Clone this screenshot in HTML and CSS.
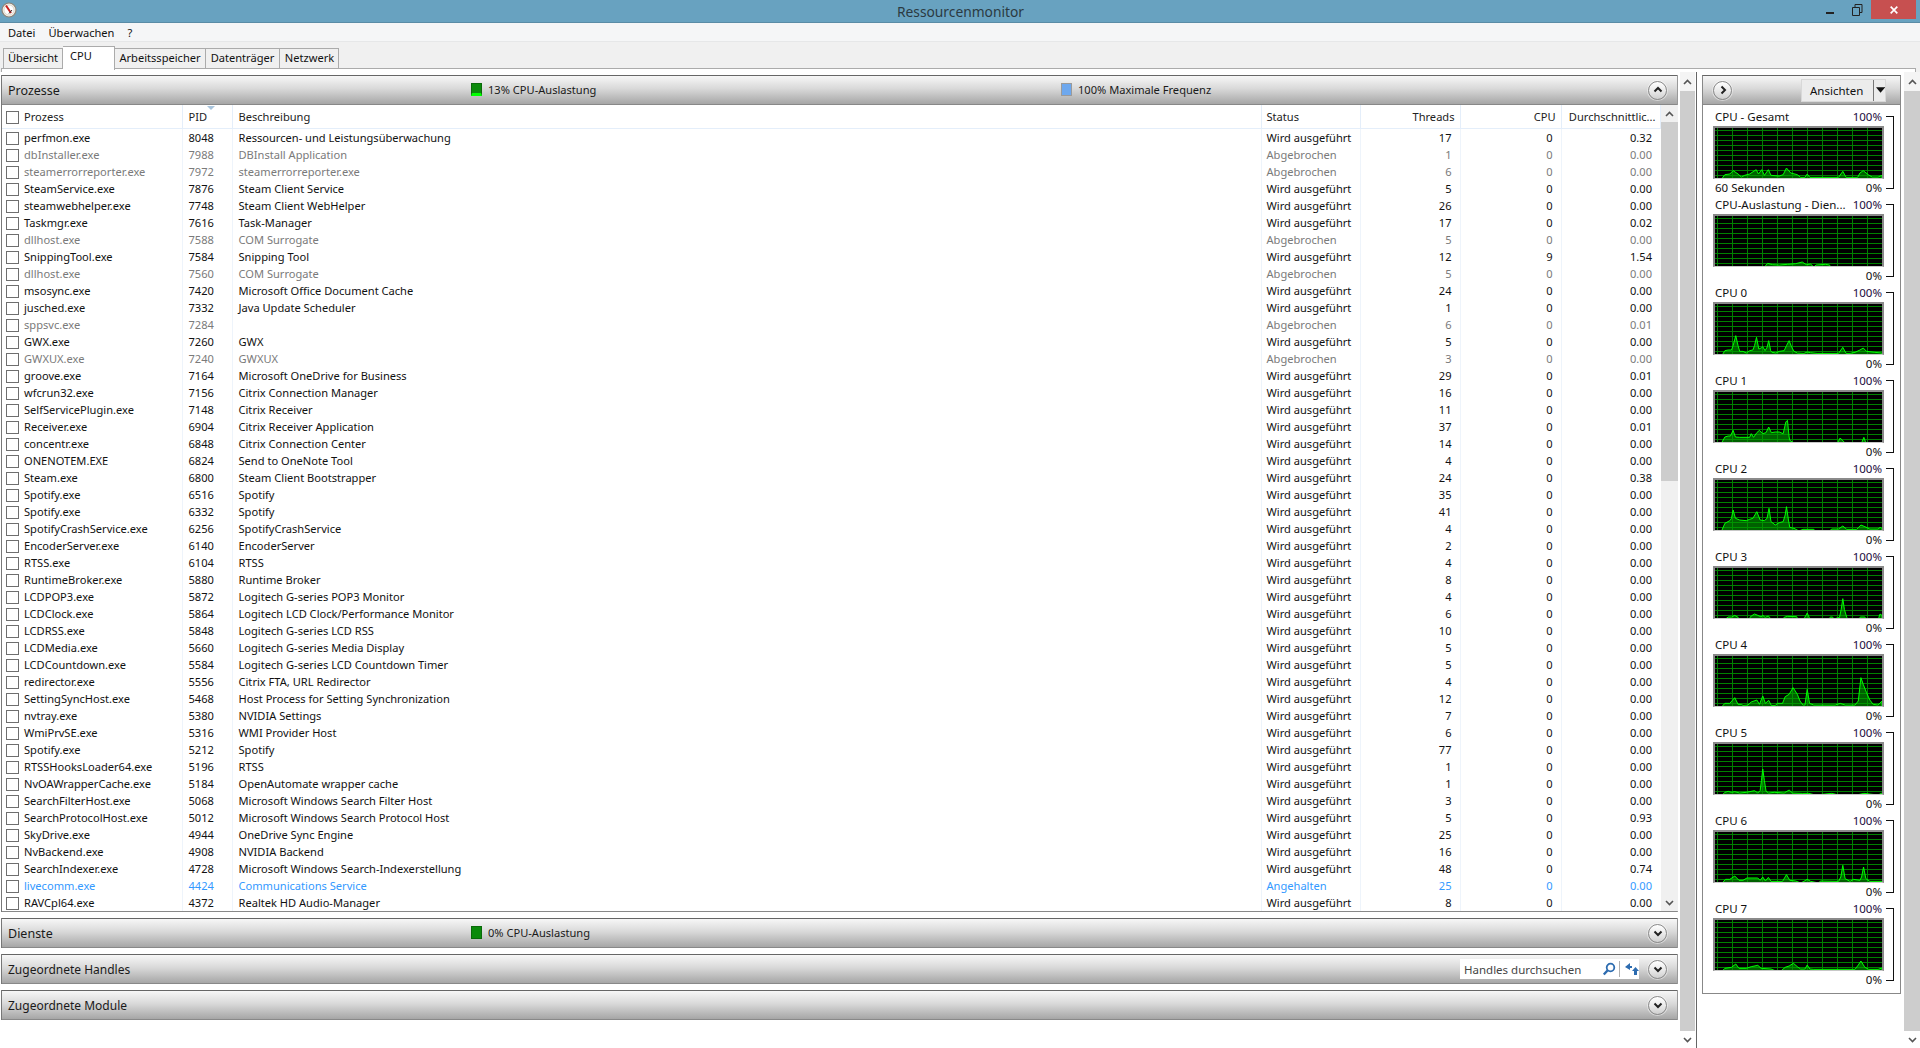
FILE: index.html
```html
<!DOCTYPE html>
<html lang="de">
<head>
<meta charset="utf-8">
<title>Ressourcenmonitor</title>
<link rel="stylesheet" href="styles.css">
</head>
<body>
<div class="app">
  <header class="titlebar">
    <div class="titleleft"><svg class="appicon" viewBox="0 0 16 16" width="16" height="16"><circle cx="8" cy="8" r="7" fill="#f4efe6" stroke="#8a8378" stroke-width="1.2"/><circle cx="8" cy="8" r="5" fill="#fff" stroke="#c9c2b4" stroke-width=".6"/><path d="M5 3.5 L10 11" stroke="#c8201c" stroke-width="2"/><path d="M8 11.5 L11 8" stroke="#333" stroke-width="1"/></svg></div>
    <div class="wintitle">Ressourcenmonitor</div>
    <div class="winbtns">
      <svg class="wb" viewBox="0 0 26 19" width="26" height="19"><rect x="8" y="12" width="8" height="2" fill="#222"/></svg>
      <svg class="wb" viewBox="0 0 26 19" width="26" height="19"><path d="M8.5 7.5h7v8h-7zM11 7V4.5h7v8h-2.5" fill="none" stroke="#222"/></svg>
      <div class="closebtn"><svg viewBox="0 0 12 12" width="10" height="10"><path d="M2 2l8 8M10 2l-8 8" stroke="#fff" stroke-width="2"/></svg></div>
    </div>
  </header>
  <nav class="menubar"><span>Datei</span><span>Überwachen</span><span>?</span></nav>
  <div class="tabstrip">
    <div class="tabs">
      <div class="tab t-uber">Übersicht</div>
      <div class="tab active t-cpu">CPU</div>
      <div class="tab t-mem">Arbeitsspeicher</div>
      <div class="tab t-disk">Datenträger</div>
      <div class="tab t-net">Netzwerk</div>
    </div>
    <div class="tabline"></div>
  </div>
  <main class="main">
    <div class="leftpane">
      <section class="panel">
        <div class="sechead">
          <div class="sectitle">Prozesse</div>
          <div class="ind ind-first"><i class="sq sq-green sq-lit"></i>13% CPU-Auslastung</div>
          <div class="ind"><i class="sq sq-blue"></i>100% Maximale Frequenz</div>
          <span class="circle"><svg viewBox="0 0 12 12" width="12" height="12"><path d="M2.5 7.5L6 4l3.5 3.5" fill="none" stroke="#222" stroke-width="2"/></svg></span>
        </div>
        <div class="listwrap">
          <table class="ptable">
            <colgroup><col class="w-name"><col class="w-pid"><col class="w-desc"><col class="w-stat"><col class="w-thr"><col class="w-cpu"><col class="w-avg"></colgroup>
            <thead>
              <tr><th class="name"><i class="cb"></i>Prozess</th><th class="pidh">PID<i class="sortmark"></i></th><th>Beschreibung</th><th class="stat">Status</th><th class="num">Threads</th><th class="num">CPU</th><th class="num avgh">Durchschnittlic...</th></tr>
            </thead>
            <tbody>
              <tr><td class="name"><i class="cb"></i>perfmon.exe</td><td>8048</td><td>Ressourcen- und Leistungsüberwachung</td><td class="stat">Wird ausgeführt</td><td class="num">17</td><td class="num">0</td><td class="num">0.32</td></tr>
              <tr class="off"><td class="name"><i class="cb"></i>dbInstaller.exe</td><td>7988</td><td>DBInstall Application</td><td class="stat">Abgebrochen</td><td class="num">1</td><td class="num">0</td><td class="num">0.00</td></tr>
              <tr class="off"><td class="name"><i class="cb"></i>steamerrorreporter.exe</td><td>7972</td><td>steamerrorreporter.exe</td><td class="stat">Abgebrochen</td><td class="num">6</td><td class="num">0</td><td class="num">0.00</td></tr>
              <tr><td class="name"><i class="cb"></i>SteamService.exe</td><td>7876</td><td>Steam Client Service</td><td class="stat">Wird ausgeführt</td><td class="num">5</td><td class="num">0</td><td class="num">0.00</td></tr>
              <tr><td class="name"><i class="cb"></i>steamwebhelper.exe</td><td>7748</td><td>Steam Client WebHelper</td><td class="stat">Wird ausgeführt</td><td class="num">26</td><td class="num">0</td><td class="num">0.00</td></tr>
              <tr><td class="name"><i class="cb"></i>Taskmgr.exe</td><td>7616</td><td>Task-Manager</td><td class="stat">Wird ausgeführt</td><td class="num">17</td><td class="num">0</td><td class="num">0.02</td></tr>
              <tr class="off"><td class="name"><i class="cb"></i>dllhost.exe</td><td>7588</td><td>COM Surrogate</td><td class="stat">Abgebrochen</td><td class="num">5</td><td class="num">0</td><td class="num">0.00</td></tr>
              <tr><td class="name"><i class="cb"></i>SnippingTool.exe</td><td>7584</td><td>Snipping Tool</td><td class="stat">Wird ausgeführt</td><td class="num">12</td><td class="num">9</td><td class="num">1.54</td></tr>
              <tr class="off"><td class="name"><i class="cb"></i>dllhost.exe</td><td>7560</td><td>COM Surrogate</td><td class="stat">Abgebrochen</td><td class="num">5</td><td class="num">0</td><td class="num">0.00</td></tr>
              <tr><td class="name"><i class="cb"></i>msosync.exe</td><td>7420</td><td>Microsoft Office Document Cache</td><td class="stat">Wird ausgeführt</td><td class="num">24</td><td class="num">0</td><td class="num">0.00</td></tr>
              <tr><td class="name"><i class="cb"></i>jusched.exe</td><td>7332</td><td>Java Update Scheduler</td><td class="stat">Wird ausgeführt</td><td class="num">1</td><td class="num">0</td><td class="num">0.00</td></tr>
              <tr class="off"><td class="name"><i class="cb"></i>sppsvc.exe</td><td>7284</td><td></td><td class="stat">Abgebrochen</td><td class="num">6</td><td class="num">0</td><td class="num">0.01</td></tr>
              <tr><td class="name"><i class="cb"></i>GWX.exe</td><td>7260</td><td>GWX</td><td class="stat">Wird ausgeführt</td><td class="num">5</td><td class="num">0</td><td class="num">0.00</td></tr>
              <tr class="off"><td class="name"><i class="cb"></i>GWXUX.exe</td><td>7240</td><td>GWXUX</td><td class="stat">Abgebrochen</td><td class="num">3</td><td class="num">0</td><td class="num">0.00</td></tr>
              <tr><td class="name"><i class="cb"></i>groove.exe</td><td>7164</td><td>Microsoft OneDrive for Business</td><td class="stat">Wird ausgeführt</td><td class="num">29</td><td class="num">0</td><td class="num">0.01</td></tr>
              <tr><td class="name"><i class="cb"></i>wfcrun32.exe</td><td>7156</td><td>Citrix Connection Manager</td><td class="stat">Wird ausgeführt</td><td class="num">16</td><td class="num">0</td><td class="num">0.00</td></tr>
              <tr><td class="name"><i class="cb"></i>SelfServicePlugin.exe</td><td>7148</td><td>Citrix Receiver</td><td class="stat">Wird ausgeführt</td><td class="num">11</td><td class="num">0</td><td class="num">0.00</td></tr>
              <tr><td class="name"><i class="cb"></i>Receiver.exe</td><td>6904</td><td>Citrix Receiver Application</td><td class="stat">Wird ausgeführt</td><td class="num">37</td><td class="num">0</td><td class="num">0.01</td></tr>
              <tr><td class="name"><i class="cb"></i>concentr.exe</td><td>6848</td><td>Citrix Connection Center</td><td class="stat">Wird ausgeführt</td><td class="num">14</td><td class="num">0</td><td class="num">0.00</td></tr>
              <tr><td class="name"><i class="cb"></i>ONENOTEM.EXE</td><td>6824</td><td>Send to OneNote Tool</td><td class="stat">Wird ausgeführt</td><td class="num">4</td><td class="num">0</td><td class="num">0.00</td></tr>
              <tr><td class="name"><i class="cb"></i>Steam.exe</td><td>6800</td><td>Steam Client Bootstrapper</td><td class="stat">Wird ausgeführt</td><td class="num">24</td><td class="num">0</td><td class="num">0.38</td></tr>
              <tr><td class="name"><i class="cb"></i>Spotify.exe</td><td>6516</td><td>Spotify</td><td class="stat">Wird ausgeführt</td><td class="num">35</td><td class="num">0</td><td class="num">0.00</td></tr>
              <tr><td class="name"><i class="cb"></i>Spotify.exe</td><td>6332</td><td>Spotify</td><td class="stat">Wird ausgeführt</td><td class="num">41</td><td class="num">0</td><td class="num">0.00</td></tr>
              <tr><td class="name"><i class="cb"></i>SpotifyCrashService.exe</td><td>6256</td><td>SpotifyCrashService</td><td class="stat">Wird ausgeführt</td><td class="num">4</td><td class="num">0</td><td class="num">0.00</td></tr>
              <tr><td class="name"><i class="cb"></i>EncoderServer.exe</td><td>6140</td><td>EncoderServer</td><td class="stat">Wird ausgeführt</td><td class="num">2</td><td class="num">0</td><td class="num">0.00</td></tr>
              <tr><td class="name"><i class="cb"></i>RTSS.exe</td><td>6104</td><td>RTSS</td><td class="stat">Wird ausgeführt</td><td class="num">4</td><td class="num">0</td><td class="num">0.00</td></tr>
              <tr><td class="name"><i class="cb"></i>RuntimeBroker.exe</td><td>5880</td><td>Runtime Broker</td><td class="stat">Wird ausgeführt</td><td class="num">8</td><td class="num">0</td><td class="num">0.00</td></tr>
              <tr><td class="name"><i class="cb"></i>LCDPOP3.exe</td><td>5872</td><td>Logitech G-series POP3 Monitor</td><td class="stat">Wird ausgeführt</td><td class="num">4</td><td class="num">0</td><td class="num">0.00</td></tr>
              <tr><td class="name"><i class="cb"></i>LCDClock.exe</td><td>5864</td><td>Logitech LCD Clock/Performance Monitor</td><td class="stat">Wird ausgeführt</td><td class="num">6</td><td class="num">0</td><td class="num">0.00</td></tr>
              <tr><td class="name"><i class="cb"></i>LCDRSS.exe</td><td>5848</td><td>Logitech G-series LCD RSS</td><td class="stat">Wird ausgeführt</td><td class="num">10</td><td class="num">0</td><td class="num">0.00</td></tr>
              <tr><td class="name"><i class="cb"></i>LCDMedia.exe</td><td>5660</td><td>Logitech G-series Media Display</td><td class="stat">Wird ausgeführt</td><td class="num">5</td><td class="num">0</td><td class="num">0.00</td></tr>
              <tr><td class="name"><i class="cb"></i>LCDCountdown.exe</td><td>5584</td><td>Logitech G-series LCD Countdown Timer</td><td class="stat">Wird ausgeführt</td><td class="num">5</td><td class="num">0</td><td class="num">0.00</td></tr>
              <tr><td class="name"><i class="cb"></i>redirector.exe</td><td>5556</td><td>Citrix FTA, URL Redirector</td><td class="stat">Wird ausgeführt</td><td class="num">4</td><td class="num">0</td><td class="num">0.00</td></tr>
              <tr><td class="name"><i class="cb"></i>SettingSyncHost.exe</td><td>5468</td><td>Host Process for Setting Synchronization</td><td class="stat">Wird ausgeführt</td><td class="num">12</td><td class="num">0</td><td class="num">0.00</td></tr>
              <tr><td class="name"><i class="cb"></i>nvtray.exe</td><td>5380</td><td>NVIDIA Settings</td><td class="stat">Wird ausgeführt</td><td class="num">7</td><td class="num">0</td><td class="num">0.00</td></tr>
              <tr><td class="name"><i class="cb"></i>WmiPrvSE.exe</td><td>5316</td><td>WMI Provider Host</td><td class="stat">Wird ausgeführt</td><td class="num">6</td><td class="num">0</td><td class="num">0.00</td></tr>
              <tr><td class="name"><i class="cb"></i>Spotify.exe</td><td>5212</td><td>Spotify</td><td class="stat">Wird ausgeführt</td><td class="num">77</td><td class="num">0</td><td class="num">0.00</td></tr>
              <tr><td class="name"><i class="cb"></i>RTSSHooksLoader64.exe</td><td>5196</td><td>RTSS</td><td class="stat">Wird ausgeführt</td><td class="num">1</td><td class="num">0</td><td class="num">0.00</td></tr>
              <tr><td class="name"><i class="cb"></i>NvOAWrapperCache.exe</td><td>5184</td><td>OpenAutomate wrapper cache</td><td class="stat">Wird ausgeführt</td><td class="num">1</td><td class="num">0</td><td class="num">0.00</td></tr>
              <tr><td class="name"><i class="cb"></i>SearchFilterHost.exe</td><td>5068</td><td>Microsoft Windows Search Filter Host</td><td class="stat">Wird ausgeführt</td><td class="num">3</td><td class="num">0</td><td class="num">0.00</td></tr>
              <tr><td class="name"><i class="cb"></i>SearchProtocolHost.exe</td><td>5012</td><td>Microsoft Windows Search Protocol Host</td><td class="stat">Wird ausgeführt</td><td class="num">5</td><td class="num">0</td><td class="num">0.93</td></tr>
              <tr><td class="name"><i class="cb"></i>SkyDrive.exe</td><td>4944</td><td>OneDrive Sync Engine</td><td class="stat">Wird ausgeführt</td><td class="num">25</td><td class="num">0</td><td class="num">0.00</td></tr>
              <tr><td class="name"><i class="cb"></i>NvBackend.exe</td><td>4908</td><td>NVIDIA Backend</td><td class="stat">Wird ausgeführt</td><td class="num">16</td><td class="num">0</td><td class="num">0.00</td></tr>
              <tr><td class="name"><i class="cb"></i>SearchIndexer.exe</td><td>4728</td><td>Microsoft Windows Search-Indexerstellung</td><td class="stat">Wird ausgeführt</td><td class="num">48</td><td class="num">0</td><td class="num">0.74</td></tr>
              <tr class="susp"><td class="name"><i class="cb"></i>livecomm.exe</td><td>4424</td><td>Communications Service</td><td class="stat">Angehalten</td><td class="num">25</td><td class="num">0</td><td class="num">0.00</td></tr>
              <tr><td class="name"><i class="cb"></i>RAVCpl64.exe</td><td>4372</td><td>Realtek HD Audio-Manager</td><td class="stat">Wird ausgeführt</td><td class="num">8</td><td class="num">0</td><td class="num">0.00</td></tr>
            </tbody>
          </table>
          <div class="vscroll inner">
            <div class="sbtn"><svg viewBox="0 0 9 6" width="9" height="6"><path d="M1 5l3.5-3.5L8 5" fill="none" stroke="#555" stroke-width="1.6"/></svg></div>
            <div class="thumb thumb-inner"></div>
            <div class="sgap"></div>
            <div class="sbtn"><svg viewBox="0 0 9 6" width="9" height="6"><path d="M1 1l3.5 3.5L8 1" fill="none" stroke="#555" stroke-width="1.6"/></svg></div>
          </div>
        </div>
      </section>
      <section class="panel collapsed">
        <div class="sechead">
          <div class="sectitle">Dienste</div>
          <div class="ind ind-first"><i class="sq sq-green"></i>0% CPU-Auslastung</div>
          <span class="circle"><svg viewBox="0 0 12 12" width="12" height="12"><path d="M2.5 4.5L6 8l3.5-3.5" fill="none" stroke="#222" stroke-width="2"/></svg></span>
        </div>
      </section>
      <section class="panel collapsed">
        <div class="sechead">
          <div class="sectitle long">Zugeordnete Handles</div>
          <div class="search">
            <span class="searchtext">Handles durchsuchen</span>
            <svg class="sicon" viewBox="0 0 14 14" width="14" height="14"><circle cx="8.5" cy="5.5" r="3.8" fill="none" stroke="#2d6cb0" stroke-width="1.8"/><path d="M5.7 8.3L1.8 12.5" stroke="#2d6cb0" stroke-width="2.4"/></svg>
            <i class="sdiv"></i>
            <svg class="sicon" viewBox="0 0 16 14" width="16" height="14"><path d="M7 1L2 5l5 3V6h2V4H7z" fill="#2d6cb0"/><path d="M11 13V9H9l3.5-4L16 9h-2v4z" fill="#2d6cb0"/></svg>
          </div>
          <span class="circle near"><svg viewBox="0 0 12 12" width="12" height="12"><path d="M2.5 4.5L6 8l3.5-3.5" fill="none" stroke="#222" stroke-width="2"/></svg></span>
        </div>
      </section>
      <section class="panel collapsed">
        <div class="sechead">
          <div class="sectitle long">Zugeordnete Module</div>
          <span class="circle"><svg viewBox="0 0 12 12" width="12" height="12"><path d="M2.5 4.5L6 8l3.5-3.5" fill="none" stroke="#222" stroke-width="2"/></svg></span>
        </div>
      </section>
    </div>
    <div class="vscroll outer">
      <div class="sbtn"><svg viewBox="0 0 9 6" width="9" height="6"><path d="M1 5l3.5-3.5L8 5" fill="none" stroke="#555" stroke-width="1.6"/></svg></div>
      <div class="thumb thumb-grow"></div>
      <div class="sbtn"><svg viewBox="0 0 9 6" width="9" height="6"><path d="M1 1l3.5 3.5L8 1" fill="none" stroke="#555" stroke-width="1.6"/></svg></div>
    </div>
    <div class="splitter"></div>
    <aside class="rightpane">
      <div class="rightbox">
        <div class="righthead">
          <span class="circle first"><svg viewBox="0 0 12 12" width="12" height="12"><path d="M4.5 2.5L8 6l-3.5 3.5" fill="none" stroke="#222" stroke-width="2"/></svg></span>
          <div class="viewbtn"><span class="viewlabel">Ansichten</span><i class="viewdiv"></i><svg viewBox="0 0 10 6" width="10" height="6"><path d="M0 0h10L5 6z" fill="#111"/></svg></div>
        </div>
        <div class="graphs">
          <div class="gblock">
            <div class="gmain">
              <div class="glabels"><span>CPU - Gesamt</span><span class="pct">100%</span></div>
              <div class="graph"><svg viewBox="45 -150 507 150" preserveAspectRatio="none"><polyline transform="scale(1,-1)" points="65,-3 75,10 90,12 100,22 115,12 125,3 135,8 150,12 170,25 177,12 187,25 195,8 207,25 215,8 240,6 252,10 262,30 275,15 295,10 305,2 318,2 325,12 333,2 420,2 433,20 443,2 478,2 485,15 495,22 510,10 522,3 540,3 552,8 552,-3"/></svg></div>
              <div class="glabels foot"><span>60 Sekunden</span><span>0%</span></div>
            </div>
            <i class="bracket"></i>
          </div>
          <div class="gblock">
            <div class="gmain">
              <div class="glabels"><span>CPU-Auslastung - Dien...</span><span class="pct">100%</span></div>
              <div class="graph"><svg viewBox="45 -150 507 150" preserveAspectRatio="none"><polyline transform="scale(1,-1)" points="195,-3 205,8 220,4 240,3 265,5 290,7 310,12 322,4 335,6 345,-3 352,3 380,5 393,3 395,-3"/></svg></div>
              <div class="glabels foot"><span></span><span>0%</span></div>
            </div>
            <i class="bracket"></i>
          </div>
          <div class="gblock">
            <div class="gmain">
              <div class="glabels"><span>CPU 0</span><span class="pct">100%</span></div>
              <div class="graph"><svg viewBox="45 -150 507 150" preserveAspectRatio="none"><polyline transform="scale(1,-1)" points="67,-3 75,10 85,12 95,12 100,25 108,55 115,25 120,8 130,8 140,3 150,10 160,12 165,25 171,50 178,15 185,18 190,22 197,10 203,20 208,40 214,10 218,5 230,3 240,8 255,10 262,25 270,40 278,20 285,8 295,3 315,2 325,6 335,4 355,2 420,2 433,20 443,2 455,2 470,5 485,12 495,18 505,8 530,5 552,3 552,-3"/></svg></div>
              <div class="glabels foot"><span></span><span>0%</span></div>
            </div>
            <i class="bracket"></i>
          </div>
          <div class="gblock">
            <div class="gmain">
              <div class="glabels"><span>CPU 1</span><span class="pct">100%</span></div>
              <div class="graph"><svg viewBox="45 -150 507 150" preserveAspectRatio="none"><polyline transform="scale(1,-1)" points="65,-3 75,15 85,18 92,18 100,35 107,15 120,14 150,14 155,25 162,14 172,28 180,35 190,25 200,28 208,45 216,28 228,30 240,30 252,25 260,60 265,65 270,15 272,5 285,-3 417,-3 425,12 440,-3 490,-3 497,14 503,-3"/></svg></div>
              <div class="glabels foot"><span></span><span>0%</span></div>
            </div>
            <i class="bracket"></i>
          </div>
          <div class="gblock">
            <div class="gmain">
              <div class="glabels"><span>CPU 2</span><span class="pct">100%</span></div>
              <div class="graph"><svg viewBox="45 -150 507 150" preserveAspectRatio="none"><polyline transform="scale(1,-1)" points="65,-3 75,20 90,28 95,35 100,60 107,35 120,30 140,28 150,32 160,35 172,55 182,30 195,28 203,35 209,65 215,25 228,15 240,22 252,25 258,45 262,70 268,30 272,8 285,5 300,-3 312,2 345,2 350,-3 392,-3 400,3 420,3 433,12 445,2 475,2 488,15 500,10 515,3 540,3 546,8 552,5 552,-3"/></svg></div>
              <div class="glabels foot"><span></span><span>0%</span></div>
            </div>
            <i class="bracket"></i>
          </div>
          <div class="gblock">
            <div class="gmain">
              <div class="glabels"><span>CPU 3</span><span class="pct">100%</span></div>
              <div class="graph"><svg viewBox="45 -150 507 150" preserveAspectRatio="none"><polyline transform="scale(1,-1)" points="77,-3 85,3 95,3 105,8 115,2 120,-3 148,-3 155,6 165,12 175,8 185,3 190,8 197,2 207,6 215,-3 250,-3 255,2 265,5 293,4 296,-3 315,-3 325,15 333,-3 392,-3 395,3 402,3 405,-3 423,2 428,25 433,58 438,25 445,2 450,-3 483,-3 486,3 500,3 503,-3 541,-3 546,12 552,8 552,-3"/></svg></div>
              <div class="glabels foot"><span></span><span>0%</span></div>
            </div>
            <i class="bracket"></i>
          </div>
          <div class="gblock">
            <div class="gmain">
              <div class="glabels"><span>CPU 4</span><span class="pct">100%</span></div>
              <div class="graph"><svg viewBox="45 -150 507 150" preserveAspectRatio="none"><polyline transform="scale(1,-1)" points="65,-3 75,8 90,8 105,25 115,5 125,5 130,2 145,3 155,12 172,18 180,5 190,30 198,8 208,17 216,2 228,2 235,8 250,8 258,28 270,35 282,55 295,35 303,15 312,3 318,3 325,50 332,8 345,3 410,3 425,8 440,3 470,3 480,15 488,85 495,65 505,40 515,18 525,5 540,3 552,15 552,-3"/></svg></div>
              <div class="glabels foot"><span></span><span>0%</span></div>
            </div>
            <i class="bracket"></i>
          </div>
          <div class="gblock">
            <div class="gmain">
              <div class="glabels"><span>CPU 5</span><span class="pct">100%</span></div>
              <div class="graph"><svg viewBox="45 -150 507 150" preserveAspectRatio="none"><polyline transform="scale(1,-1)" points="67,-3 75,5 85,8 95,5 105,7 120,3 140,5 165,10 175,3 182,10 186,40 190,75 195,40 200,8 208,3 225,5 255,3 270,12 280,3 310,2 330,2 350,-3 400,2 420,-3 475,-3 497,2 540,-3 552,3 552,-3"/></svg></div>
              <div class="glabels foot"><span></span><span>0%</span></div>
            </div>
            <i class="bracket"></i>
          </div>
          <div class="gblock">
            <div class="gmain">
              <div class="glabels"><span>CPU 6</span><span class="pct">100%</span></div>
              <div class="graph"><svg viewBox="45 -150 507 150" preserveAspectRatio="none"><polyline transform="scale(1,-1)" points="67,-3 77,8 90,8 105,18 118,5 130,5 142,12 175,12 182,5 190,15 198,3 207,14 215,2 250,2 262,22 272,5 290,3 305,-3 315,2 325,8 335,2 360,-3 365,3 420,2 427,15 433,50 440,10 455,2 465,8 485,5 490,15 496,45 503,10 515,2 552,2 552,-3"/></svg></div>
              <div class="glabels foot"><span></span><span>0%</span></div>
            </div>
            <i class="bracket"></i>
          </div>
          <div class="gblock">
            <div class="gmain">
              <div class="glabels"><span>CPU 7</span><span class="pct">100%</span></div>
              <div class="graph"><svg viewBox="45 -150 507 150" preserveAspectRatio="none"><polyline transform="scale(1,-1)" points="67,-3 75,5 95,8 108,18 118,5 140,5 155,10 175,14 185,5 215,3 230,-3 245,-3 258,8 270,12 283,20 295,10 305,3 318,3 325,15 333,3 345,2 470,2 480,15 488,27 500,8 512,2 540,2 552,6 552,-3"/></svg></div>
              <div class="glabels foot"><span></span><span>0%</span></div>
            </div>
            <i class="bracket"></i>
          </div>
        </div>
      </div>
    </aside>
    <div class="vscroll outer right">
      <div class="sbtn"><svg viewBox="0 0 9 6" width="9" height="6"><path d="M1 5l3.5-3.5L8 5" fill="none" stroke="#555" stroke-width="1.6"/></svg></div>
      <div class="thumb thumb-grow"></div>
      <div class="sbtn"><svg viewBox="0 0 9 6" width="9" height="6"><path d="M1 1l3.5 3.5L8 1" fill="none" stroke="#555" stroke-width="1.6"/></svg></div>
    </div>
  </main>
</div>
</body>
</html>
```
FILE: styles.css
```css
* { box-sizing: border-box; }
html, body { margin: 0; padding: 0; height: 100%; overflow: hidden; }
body { font-family: "Noto Sans", "Open Sans", sans-serif; font-size: 11.1px; color: #111; background: #fff; }
.app { width: 1920px; height: 1048px; display: flex; flex-direction: column; }

.titlebar { height: 23px; flex: none; background: #68a2c0; border-bottom: 1px solid #5a8ca6; display: grid; grid-template-columns: 1fr auto 1fr; align-items: center; padding-left: 1px; }
.titleleft { display: flex; align-items: center; }
.appicon { flex: none; margin-top: -3px; }
.wintitle { text-align: center; font-size: 13.8px; color: #2b3a42; white-space: nowrap; }
.winbtns { display: flex; align-items: flex-start; align-self: start; justify-self: end; margin-right: 4px; }
.closebtn { width: 45px; height: 19px; background: #c75050; display: flex; align-items: center; justify-content: center; margin-left: 1px; }

.menubar { height: 18px; flex: none; background: #f5f6f7; display: flex; align-items: center; padding-left: 8px; gap: 13px; color: #111; }

.tabstrip { height: 31px; flex: none; background: #f0f0f0; border-top: 1px solid #e6e7e8; padding-top: 4px; }
.tabs { display: flex; align-items: flex-end; height: 23px; padding-left: 3px; position: relative; z-index: 1; }
.tab { height: 21px; border: 1px solid #ababab; border-left-width: 0; background: #f0f0f0; line-height: 18px; text-align: center; color: #111; }
.t-uber { width: 60px; border-left-width: 1px; }
.t-cpu { width: 52px; }
.t-mem { width: 91px; }
.t-disk { width: 74px; }
.t-net { width: 59px; padding-left: 1px; }
.tab.active { height: 24px; background: #fff; border-bottom: 0; line-height: 17px; margin-bottom: -1px; text-align: left; padding-left: 7px; }
.tabline { height: 5px; margin: -1px 4px 0 1px; background: #fff; border: 1px solid #ababab; }

.main { flex: 1; min-height: 0; display: flex; background: #fff; }
.leftpane { width: 1677px; margin-left: 1px; padding-top: 3px; flex: none; display: flex; flex-direction: column; }

.panel { border-left: 1px solid #777; border-right: 1px solid #999; margin-bottom: 6px; flex: none; }
.sechead { height: 30px; display: flex; align-items: center; padding-left: 6px; background: linear-gradient(#f7f7f7, #d9d9d9 45%, #a6a6a6); border-top: 1px solid #666; border-bottom: 1px solid #888; }
.sectitle { font-size: 12.5px; color: #1a1a1a; width: 463px; flex: none; white-space: nowrap; }
.sectitle.long { font-size: 12px; }
.ind { display: flex; align-items: center; color: #1a1a1a; white-space: nowrap; margin-top: -1px; }
.ind-first { width: 590px; flex: none; }
.sq { width: 11px; height: 13px; margin-right: 6px; flex: none; display: block; border: 1px solid #aaa; }
.sq-green { background: radial-gradient(#000 .6px, #0b8a0b .7px) 0 0 / 2px 2px; border-color: #0a6a0a; }
.sq-lit { border-bottom: 3px solid #0f0; }
.sq-blue { background: #6ea8ee; border-color: #9a9a9a; }
.circle { width: 19px; height: 19px; border-radius: 50%; margin-left: auto; margin-right: 10px; flex: none; display: flex; align-items: center; justify-content: center; background: linear-gradient(#fff, #e8e8e8 55%, #cfcfcf); border: 1px solid #8a8a8a; box-shadow: 0 0 0 1px rgba(255, 255, 255, .45); }
.circle.near { margin-left: 9px; }
.circle.first { margin-left: 10px; margin-right: 0; }

.listwrap { display: flex; height: 807px; border-bottom: 1px solid #888; }
.ptable { width: 1658px; border-collapse: collapse; table-layout: fixed; flex: none; align-self: flex-start; }
.w-name { width: 180px; } .w-pid { width: 50px; } .w-desc { width: 1029px; } .w-stat { width: 99px; } .w-thr { width: 100px; } .w-cpu { width: 101px; } .w-avg { width: 99px; }
.ptable th { height: 23px; padding: 0 0 0 6px; text-align: left; font-weight: 400; white-space: nowrap; overflow: hidden; border-right: 1px solid #e4eefa; border-bottom: 1px solid #e4eefa; color: #222; position: relative; }
.ptable td { height: 17px; line-height: 17px; padding: 0 0 0 6px; white-space: nowrap; overflow: hidden; color: #111; border-right: 1px solid #eef4fb; }
.ptable td:last-child { border-right: 0; }
.ptable .name { padding-left: 4px; }
.ptable .stat { padding-left: 5px; }
.ptable td.num { text-align: right; padding-right: 8px; padding-left: 0; }
.ptable th.num { text-align: right; padding-right: 5px; padding-left: 0; }
.ptable th.avgh { padding-right: 4px; }
.ptable .off td { color: #7a7a7a; }
.ptable .susp td { color: #3399ff; }
.cb { display: inline-block; width: 13px; height: 13px; border: 1px solid #6e6e6e; background: #fff; vertical-align: -3px; margin-right: 5px; }
.sortmark { position: absolute; left: 24px; top: 1px; width: 0; height: 0; border-left: 4px solid transparent; border-right: 4px solid transparent; border-top: 4px solid #a8c4dc; }

.vscroll { display: flex; flex-direction: column; flex: none; background: #f0f0f0; }
.vscroll.inner { width: 17px; height: 806px; }
.vscroll.outer { width: 15px; margin-left: 2px; background: #fff; }
.vscroll.outer .sbtn { height: 19px; background: #f4f4f4; }
.vscroll.outer .sbtn:last-child { height: 17px; background: #fff; }
.vscroll.right { width: 16px; }
.sbtn { height: 17px; flex: none; display: flex; align-items: center; justify-content: center; }
.thumb { background: #cdcdcd; flex: none; }
.thumb-inner { height: 359px; }
.thumb-grow { flex: 1; }
.sgap { flex: 1; }

.splitter { width: 1px; flex: none; background: #666; margin-left: 1px; }
.rightpane { width: 205px; flex: none; padding: 3px 0 0 5px; }
.rightbox { width: 199px; border: 1px solid #888; border-top-color: #666; }
.righthead { height: 30px; margin-top: -1px; display: flex; align-items: center; background: linear-gradient(#f7f7f7, #d9d9d9 45%, #a6a6a6); border-top: 1px solid #666; border-bottom: 1px solid #888; }
.viewbtn { width: 85px; height: 23px; margin-left: auto; margin-right: 14px; background: #ececec; border: 1px solid #d8d8d8; display: flex; align-items: center; padding-left: 8px; font-size: 11.5px; }
.viewlabel { width: 63px; flex: none; white-space: nowrap; }
.viewdiv { width: 1px; height: 21px; background: #777; margin-right: 2px; }
.graphs { padding: 3px 0 5px 10px; }
.gblock { display: flex; height: 88px; }
.gmain { width: 171px; flex: none; }
.glabels { height: 18px; display: flex; justify-content: space-between; align-items: center; padding: 0 2px 2px; font-size: 11.5px; color: #111; white-space: nowrap; }
.glabels.foot { height: 17px; padding: 0 2px; }
.pct { color: #1b0b40; }
.graph { height: 53px; background-color: #000; background-image: linear-gradient(90deg, #008000 1px, transparent 1px), linear-gradient(#008000 1px, transparent 1px); background-size: 15px 100%, 100% 5px; background-position: 2px 0, 0 2px; border-top: 2px solid #8a8a8a; border-left: 2px solid #8a8a8a; border-right: 2px solid #8a8a8a; border-bottom: 1px solid #c8c8c8; }
.graph svg { display: block; width: 100%; height: 100%; }
.graph polyline { fill: rgba(0, 160, 0, .6); stroke: #00ff00; stroke-width: 3; stroke-linejoin: miter; }
.bracket { display: block; width: 8px; height: 73px; margin: 8px 0 0 2px; border: 1px solid #111; border-left: 0; flex: none; }

.search { margin-left: auto; width: 179px; height: 20px; background: #fff; display: flex; align-items: center; padding-left: 4px; font-size: 11.5px; color: #444; flex: none; }
.searchtext { width: 138px; flex: none; white-space: nowrap; }
.sicon { flex: none; }
.sdiv { width: 1px; height: 16px; background: #b0b0b0; margin: 0 3px; }
```
